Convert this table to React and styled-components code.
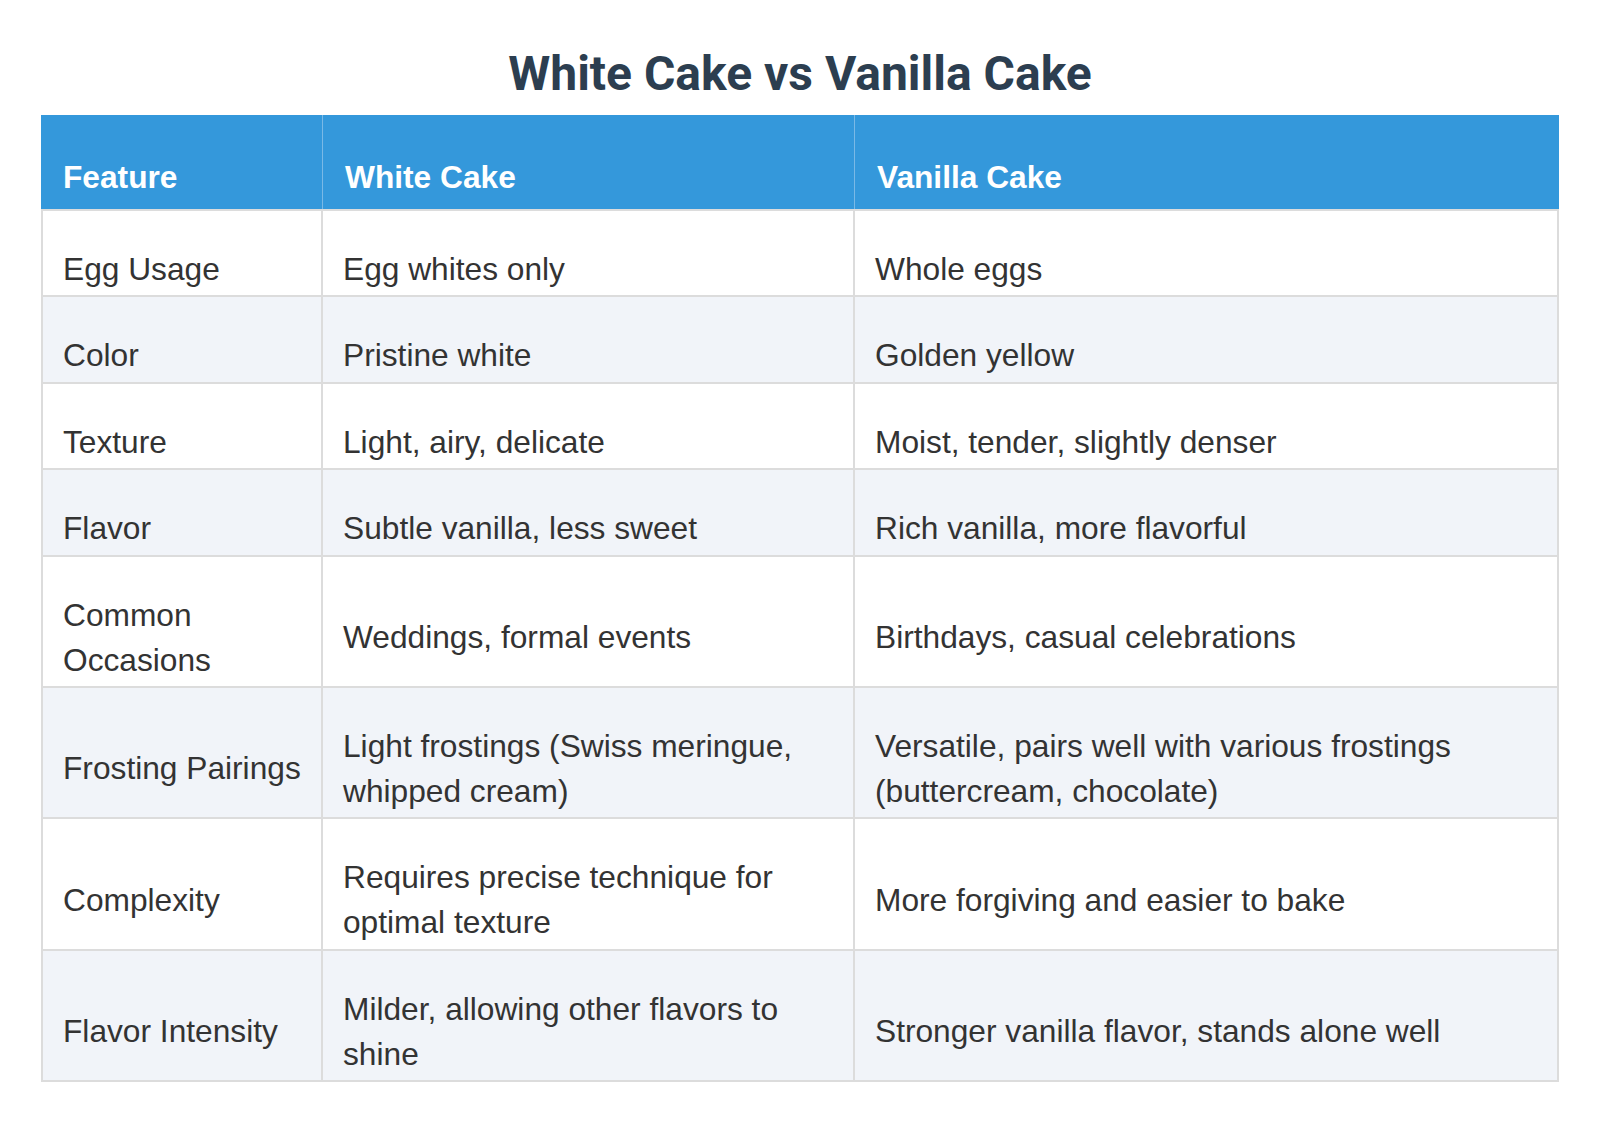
import React from 'react';
import styled, { createGlobalStyle } from 'styled-components';

const GlobalStyle = createGlobalStyle`
  html, body {
    margin: 0;
    padding: 0;
    background: #fff;
  }
`;

const Page = styled.div`
  width: 1600px;
  min-height: 1124px;
  box-sizing: border-box;
  padding: 44px 41px 0;
`;

const Title = styled.h1`
  margin: 0 0 11px;
  font-family: Roboto, "Liberation Sans", sans-serif;
  font-weight: 700;
  font-size: 48px;
  line-height: 60px;
  color: #2c3e50;
  text-align: center;
`;

const Table = styled.table`
  width: 1518px;
  table-layout: fixed;
  border-collapse: separate;
  border-spacing: 0;
  font-family: "Liberation Sans", Arial, sans-serif;
  font-size: 31.7px;
  line-height: 45px;
`;

const HeadCell = styled.th`
  background: #3498db;
  color: #fff;
  font-weight: 700;
  text-align: left;
  vertical-align: middle;
  padding: 40px 14px 9px 22px;
  border-right: ${({ last }) => (last ? 'none' : '1px solid #7ab9e6')};
`;

const Row = styled.tr`
  background: ${({ striped }) => (striped ? '#f1f4f9' : '#fff')};
`;

const Cell = styled.td`
  color: #333;
  vertical-align: middle;
  padding: 36px 14px 3.4px 20px;
  border-right: 2px solid #dcdcdc;
  border-bottom: 2px solid #dcdcdc;
  border-left: ${({ first }) => (first ? '2px solid #dcdcdc' : 'none')};
  border-top: ${({ top }) => (top ? '2px solid #dcdcdc' : 'none')};
`;

const rows = [
  ['Egg Usage', 'Egg whites only', 'Whole eggs'],
  ['Color', 'Pristine white', 'Golden yellow'],
  ['Texture', 'Light, airy, delicate', 'Moist, tender, slightly denser'],
  ['Flavor', 'Subtle vanilla, less sweet', 'Rich vanilla, more flavorful'],
  ['Common Occasions', 'Weddings, formal events', 'Birthdays, casual celebrations'],
  ['Frosting Pairings', 'Light frostings (Swiss meringue, whipped cream)', 'Versatile, pairs well with various frostings (buttercream, chocolate)'],
  ['Complexity', 'Requires precise technique for optimal texture', 'More forgiving and easier to bake'],
  ['Flavor Intensity', 'Milder, allowing other flavors to shine', 'Stronger vanilla flavor, stands alone well'],
];

const App = () => (
  <Page>
    <GlobalStyle />
    <Title>White Cake vs Vanilla Cake</Title>
    <Table>
      <colgroup>
        <col style={{ width: 282 }} />
        <col style={{ width: 532 }} />
        <col style={{ width: 704 }} />
      </colgroup>
      <thead>
        <tr>
          <HeadCell>Feature</HeadCell>
          <HeadCell>White Cake</HeadCell>
          <HeadCell last>Vanilla Cake</HeadCell>
        </tr>
      </thead>
      <tbody>
        {rows.map((r, i) => (
          <Row key={r[0]} striped={i % 2 === 1}>
            {r.map((text, j) => (
              <Cell key={j} first={j === 0} top={i === 0}>{text}</Cell>
            ))}
          </Row>
        ))}
      </tbody>
    </Table>
  </Page>
);

export default App;
